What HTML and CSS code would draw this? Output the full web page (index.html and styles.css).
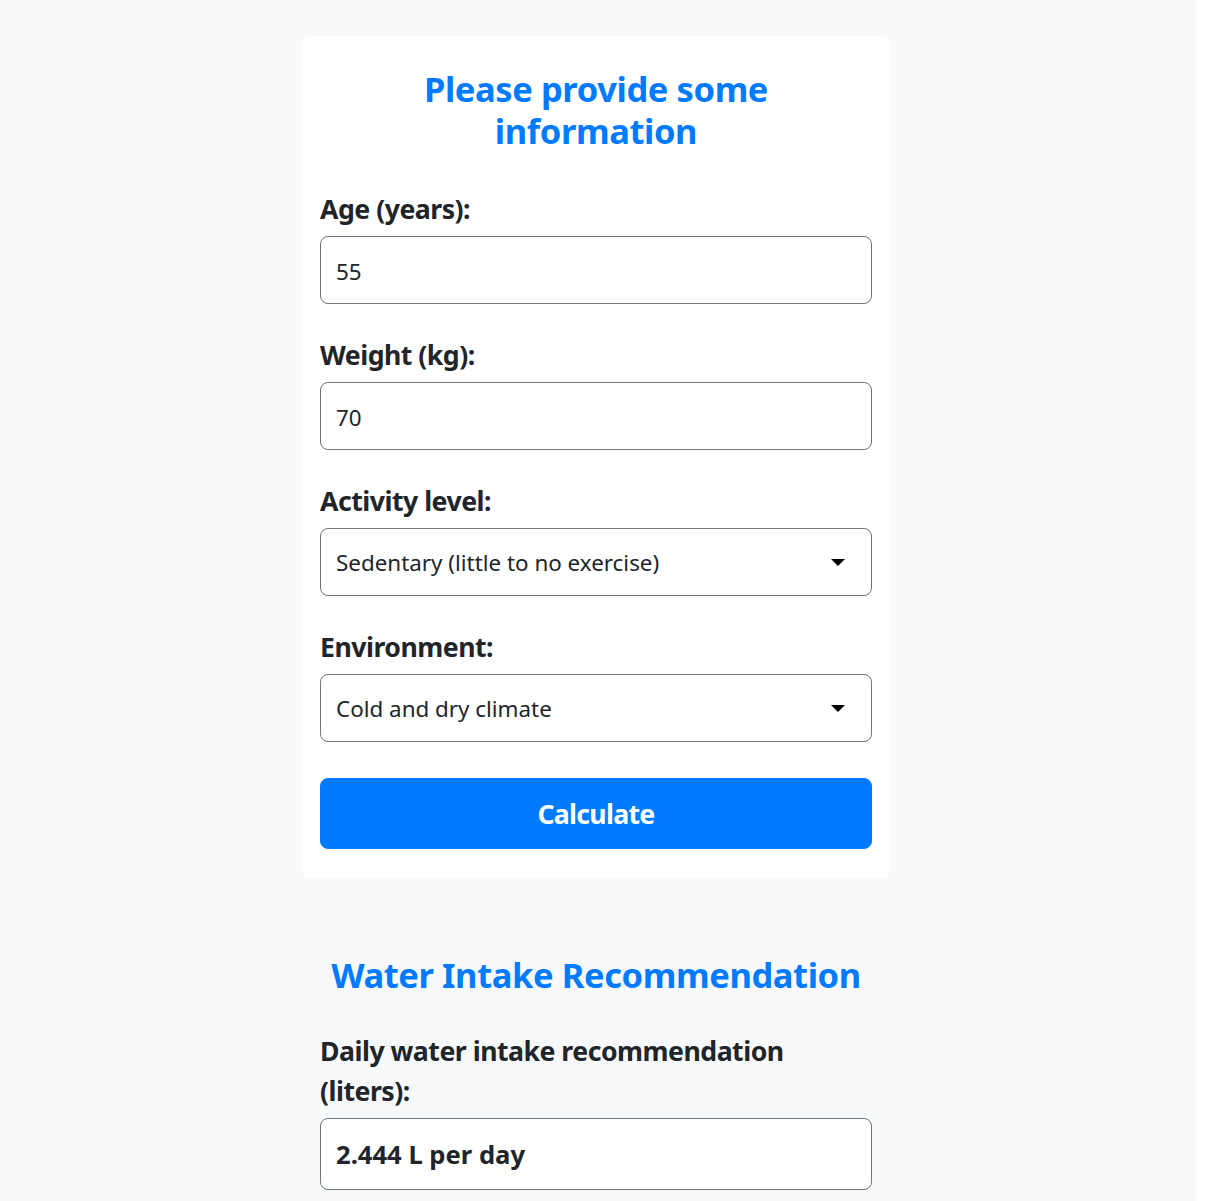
FILE: index.html
```html
<!DOCTYPE html>
<html lang="en">
<head>
<meta charset="utf-8">
<title>Water Intake Calculator</title>
<link rel="stylesheet" href="styles.css">
</head>
<body>
<div class="page">
  <main class="column">
    <form class="card">
      <h1 class="title card-title">Please provide some information</h1>
      <div class="group">
        <label class="label" for="age">Age (years):</label>
        <input class="control" id="age" type="text" value="55">
      </div>
      <div class="group">
        <label class="label" for="weight">Weight (kg):</label>
        <input class="control" id="weight" type="text" value="70">
      </div>
      <div class="group">
        <label class="label" for="activity">Activity level:</label>
        <div class="select-wrap">
          <select class="control select" id="activity">
            <option>Sedentary (little to no exercise)</option>
          </select>
        </div>
      </div>
      <div class="group">
        <label class="label" for="env">Environment:</label>
        <div class="select-wrap">
          <select class="control select" id="env">
            <option>Cold and dry climate</option>
          </select>
        </div>
      </div>
      <button class="btn" type="button">Calculate</button>
    </form>
    <section class="result">
      <h2 class="title result-title">Water Intake Recommendation</h2>
      <div class="label result-label">Daily water intake recommendation (liters):</div>
      <div class="output">2.444 L per day</div>
    </section>
  </main>
</div>
</body>
</html>
```
FILE: styles.css
```css
html, body {
  margin: 0;
  padding: 0;
  background: #ffffff;
}
body {
  font-family: "Noto Sans", "Open Sans", sans-serif;
  color: #212529;
}
.page {
  width: 1196px;
  min-height: 1201px;
  background: #f8f9fa;
  padding-top: 36px;
  box-sizing: border-box;
}
.column {
  width: 588px;
  margin-left: 302px;
}
.card {
  background: #ffffff;
  border-radius: 9px;
  padding: 32px 18px 30px;
  display: flex;
  flex-direction: column;
}
.title {
  margin: 0;
  color: #007bff;
  font-weight: 700;
  font-size: 34.5px;
  line-height: 42px;
  letter-spacing: -0.4px;
  text-align: center;
}
.card-title {
  padding: 0 60px;
  margin-bottom: 37px;
}
.group {
  display: flex;
  flex-direction: column;
  margin-bottom: 31px;
}
.group:last-of-type {
  margin-bottom: 36px;
}
.label {
  font-size: 26.67px;
  line-height: 40px;
  font-weight: 700;
  letter-spacing: -0.5px;
  margin-bottom: 7px;
}
.control {
  font-family: inherit;
  font-size: 22.4px;
  line-height: 1.5;
  color: #212529;
  background: #ffffff;
  border: 1px solid #6c757d;
  border-radius: 8px;
  padding: 17px 15px 15px;
  width: 100%;
  box-sizing: border-box;
  height: 68px;
  margin: 0;
}
.select-wrap {
  position: relative;
}
.select {
  appearance: none;
  -webkit-appearance: none;
  padding-right: 50px;
}
.select-wrap::after {
  content: "";
  position: absolute;
  right: 27px;
  top: 31px;
  border-left: 7px solid transparent;
  border-right: 7px solid transparent;
  border-top: 7px solid #000000;
  pointer-events: none;
}
.btn {
  font-family: inherit;
  font-size: 26.67px;
  line-height: 40px;
  font-weight: 700;
  letter-spacing: -0.7px;
  color: #ffffff;
  background: #007bff;
  border: 1px solid #007bff;
  border-radius: 8px;
  padding: 15px 12px;
  width: 100%;
  height: 71px;
}
.result {
  padding: 75px 18px 0;
  display: flex;
  flex-direction: column;
}
.result-title {
  margin-bottom: 35px;
}
.result-label {
  max-width: 500px;
}
.output {
  border: 1px solid #6c757d;
  border-radius: 8px;
  background: #ffffff;
  padding: 17px 15px 15px;
  height: 72px;
  box-sizing: border-box;
  font-size: 25.6px;
  line-height: 38px;
  font-weight: 700;
}
```
